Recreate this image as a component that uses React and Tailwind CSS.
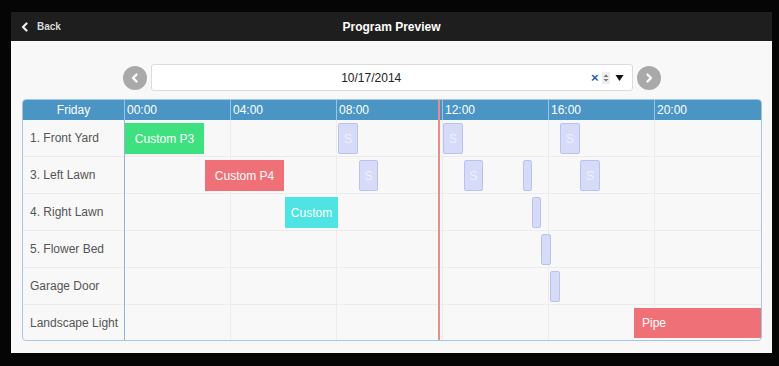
import React from "react";

const hours = ["00:00", "04:00", "08:00", "12:00", "16:00", "20:00"];
const rows = ["1. Front Yard", "3. Left Lawn", "4. Right Lawn", "5. Flower Bed", "Garage Door", "Landscape Light"];

const events = [
  { row: 0, x: 0, w: 79, label: "Custom P3", cls: "bg-[#3ee07f] text-white" },
  { row: 1, x: 80, w: 79, label: "Custom P4", cls: "bg-[#f07078] text-white" },
  { row: 2, x: 160, w: 53, label: "Custom", cls: "bg-[#4fe3e3] text-white" },
  { row: 5, x: 509, w: 127, label: "Pipe", cls: "bg-[#f07078] text-white", h: 30 },
];

const sBlocks = [
  { row: 0, x: 213, w: 20, s: true },
  { row: 0, x: 318, w: 20, s: true },
  { row: 0, x: 435, w: 20, s: true },
  { row: 1, x: 234, w: 19, s: true },
  { row: 1, x: 339, w: 19, s: true },
  { row: 1, x: 398, w: 9, s: false },
  { row: 1, x: 455, w: 20, s: true },
  { row: 2, x: 407, w: 9, s: false },
  { row: 3, x: 416, w: 10, s: false },
  { row: 4, x: 425, w: 10, s: false },
];

function Circle({ dir }) {
  return (
    <div className="w-[24px] h-[24px] rounded-full bg-[#a9a9a9] flex items-center justify-center">
      <svg width="12" height="12" viewBox="0 0 12 12">
        {dir === "left" ? (
          <path d="M7.5 2.5 L4 6 L7.5 9.5" stroke="white" strokeWidth="2.4" fill="none" strokeLinecap="round" strokeLinejoin="round" />
        ) : (
          <path d="M4.5 2.5 L8 6 L4.5 9.5" stroke="white" strokeWidth="2.4" fill="none" strokeLinecap="round" strokeLinejoin="round" />
        )}
      </svg>
    </div>
  );
}

export default function App() {
  return (
    <div className="w-[779px] h-[366px] bg-[#050505] pt-[12px] pl-[11px]" style={{ fontFamily: '"Liberation Sans", Arial, sans-serif' }}>
      <div className="w-[761px] h-[341px] bg-[#f8f8f8] flex flex-col">
        <div className="h-[29px] bg-[#1e1e1e] relative flex items-center">
          <div className="flex items-center pl-[10px] gap-[8px]">
            <svg width="8" height="10" viewBox="0 0 8 10">
              <path d="M5.5 1.5 L2 5 L5.5 8.5" stroke="#f0f0f0" strokeWidth="2.2" fill="none" strokeLinecap="round" strokeLinejoin="round" />
            </svg>
            <span className="text-[10px] font-bold text-[#d8d8d8]">Back</span>
          </div>
          <div className="absolute inset-0 flex items-center justify-center text-[12px] font-bold text-white">Program Preview</div>
        </div>
        <div className="flex-1 px-[11px]">
          <div className="flex items-center justify-center gap-[4px] mt-[23px]">
            <Circle dir="left" />
            <div className="w-[482px] h-[27px] bg-white border border-[#dcdcdc] rounded-[3px] flex items-center pr-[8px]">
              <span className="flex-1 text-center text-[12px] text-[#222]">10/17/2014</span>
              <div className="flex items-center gap-[3px]">
                <span className="text-[13px] font-bold text-[#2a5fb0] leading-none">×</span>
                <div className="flex flex-col items-center justify-center bg-[#eee] w-[8px] h-[12px]">
                  <svg width="6" height="10" viewBox="0 0 6 10">
                    <path d="M0.5 4 L3 1.5 L5.5 4 Z" fill="#777" />
                    <path d="M0.5 6 L3 8.5 L5.5 6 Z" fill="#777" />
                  </svg>
                </div>
                <svg width="9" height="8" viewBox="0 0 9 8" className="ml-[2px]">
                  <path d="M0.5 1 L8.5 1 L4.5 7 Z" fill="#111" />
                </svg>
              </div>
            </div>
            <Circle dir="right" />
          </div>

          <div className="mt-[8px] w-[740px] border border-[#a6c6e0] rounded-[4px] overflow-hidden relative bg-[#f8f8f8]">
            <div className="flex h-[20px] bg-[#4b95c5] text-white text-[12px]">
              <div className="w-[102px] border-r border-[#9cc4e2] flex items-center justify-center">Friday</div>
              {hours.map((h, i) => (
                <div key={h} className={`w-[106px] flex items-center pl-[2px] ${i < 5 ? "border-r border-[#9cc4e2]" : ""}`}>{h}</div>
              ))}
            </div>
            <div className="flex">
              <div className="w-[102px] border-r border-[#8fb4d4] flex flex-col">
                {rows.map((r, i) => (
                  <div key={r} className={`flex items-center pl-[7px] text-[12px] text-[#555] ${i < 5 ? "h-[37px] border-b border-[#ececec]" : "h-[35px]"}`}>{r}</div>
                ))}
              </div>
              <div className="relative w-[636px]">
                <div className="flex flex-col">
                  {rows.map((r, i) => (
                    <div key={r} className={`flex ${i < 5 ? "h-[37px] border-b border-[#ececec]" : "h-[35px]"}`}>
                      {hours.map((h, j) => (
                        <div key={h} className={`w-[106px] h-full ${j < 5 ? "border-r border-[#ececec]" : ""}`} />
                      ))}
                    </div>
                  ))}
                </div>
                {sBlocks.map((b, i) => (
                  <div
                    key={i}
                    className="absolute h-[31px] bg-[#d6dcf7] border border-[#b9c3f0] rounded-[2px] flex items-center justify-center text-[12px] text-[#eef0ff]"
                    style={{ left: b.x, width: b.w, top: b.row * 37 + 3 }}
                  >
                    {b.s ? "S" : ""}
                  </div>
                ))}
                {events.map((e, i) => (
                  <div
                    key={i}
                    className={`absolute flex items-center justify-center text-[12px] ${e.cls}`}
                    style={{ left: e.x, width: e.w, top: e.row * 37 + 3, height: e.h || 31 }}
                  >
                    {e.label === "Pipe" ? <span className="w-full pl-[8px]">Pipe</span> : e.label}
                  </div>
                ))}
              </div>
            </div>
            <div className="absolute top-0 bottom-0 left-[415px] w-[2px] bg-[#f08a84]" />
          </div>
        </div>
      </div>
    </div>
  );
}
